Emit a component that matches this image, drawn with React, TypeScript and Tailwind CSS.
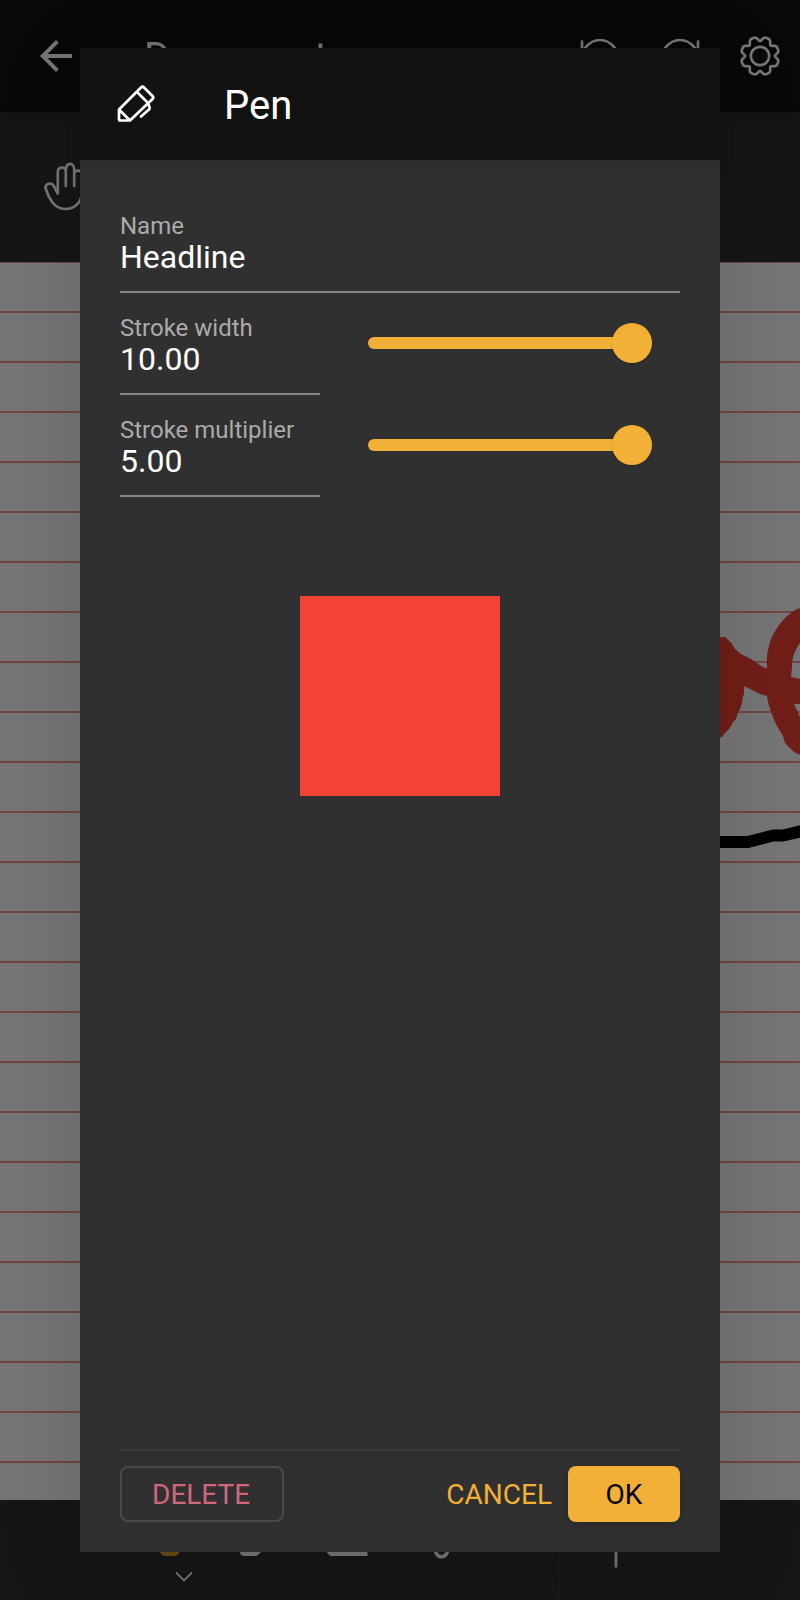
import React, { useState } from "react";

const GEAR_PATH =
  Array.from({ length: 144 }, (_, i) => {
    const angle = (i / 144) * Math.PI * 2;
    const phase = 8 * (angle - Math.PI / 8);
    const r = 17.6 + 2.1 * Math.cos(phase) - 0.6 * Math.cos(2 * phase);
    const x = (24 + r * Math.cos(angle)).toFixed(2);
    const y = (24 + r * Math.sin(angle)).toFixed(2);
    return `${i === 0 ? "M" : "L"}${x} ${y}`;
  }).join("") + "Z";

type IconProps = { children: React.ReactNode; className?: string };

function Icon({ children, className = "" }: IconProps) {
  return (
    <svg
      viewBox="0 0 48 48"
      className={`block h-12 w-12 shrink-0 overflow-visible ${className}`}
      fill="none"
      stroke="currentColor"
      strokeWidth="2.7"
      strokeLinecap="round"
      strokeLinejoin="round"
      aria-hidden="true"
    >
      {children}
    </svg>
  );
}

function TopBar() {
  return (
    <header className="relative flex h-28 shrink-0 items-center bg-[#121212] pr-4 pl-8 shadow-[0_4px_8px_rgba(0,0,0,0.1)]">
      <button type="button" aria-label="Back">
        <Icon>
          <path
            fill="currentColor"
            stroke="none"
            d="M40 22H15.66l11.18-11.18L24 8 8 24l16 16 2.82-2.82L15.66 26H40z"
          />
        </Icon>
      </button>
      <h1 className="ml-16 flex-1 pt-1 text-[40px] leading-[48px]">Document</h1>
      <div className="flex gap-8">
        <button type="button" aria-label="Undo">
          <Icon>
            <path d="M6 9.500V21H17.500M6.500 19.500L9 16C13 11 18 8 24 8C30 8 35 11 39 16C43 22 42 40 24 42" />
          </Icon>
        </button>
        <button type="button" aria-label="Redo">
          <Icon>
            <path d="M42 9.500V21H30.500M41.500 19.500L39 16C35 11 30 8 24 8C18 8 13 11 9 16C5 22 6 40 24 42" />
          </Icon>
        </button>
        <button type="button" aria-label="Settings">
          <Icon>
            <path d={GEAR_PATH} />
            <circle cx="24" cy="24" r="9.200" />
          </Icon>
        </button>
      </div>
    </header>
  );
}

function ToolBar() {
  return (
    <div className="flex h-[150px] shrink-0 items-center bg-[#303030] pl-10">
      <button type="button" aria-label="Hand">
        <Icon>
          <path d="M17.800 30.500L13.500 22.500C12 19.500 5.200 20 5.500 25C7 30 9.500 35.500 12.500 39.500C15.500 43.500 19.500 45.800 25 46C36 46 42 38 42 29V12C42 6.500 34.500 6.500 34.300 10.500M17.800 30.500V9C18 3.200 25.500 3.200 25.800 8V23M25.800 7.500C25.800 -1 34 -1 34.200 6V23" />
        </Icon>
      </button>
    </div>
  );
}

function Paper() {
  return (
    <main className="relative flex-1 overflow-hidden bg-white bg-[linear-gradient(to_bottom,rgba(244,67,54,0.56)_1px,transparent_1px,transparent_49px,rgba(244,67,54,0.56)_49px)] bg-[length:100%_50px]">
      <svg
        viewBox="700 560 100 320"
        className="absolute top-[298px] right-0 h-[320px] w-[100px]"
        aria-hidden="true"
      >
        <path
          fill="#f44336"
          fillRule="evenodd"
          d="M700 637H725.500L732 644L735 649L741 654L751 659L761 666L767 668.500C766 654 769 646 771 639C776 628 786 613 800 608V643C795 650 792 657 792 667L791 677L800 679V704L794 704L800 717V755L794 752L785 743L783 736L777 726C772 716 768 704 767 696L760 694L744 686V694L742.500 698L742 703L740 709L737.500 714L736 719L733 722L730 728L725 733L722 737L718 738H700Z"
        />
        <path
          fill="none"
          stroke="#000"
          strokeWidth="12"
          strokeLinejoin="round"
          d="M700 842H748L773 835.500H783L802 831"
        />
      </svg>
    </main>
  );
}

function BottomBar() {
  return (
    <footer className="flex h-[100px] shrink-0 bg-[#303030]">
      <div className="flex w-[70%] items-start gap-8 border-r-2 border-[#383838] pt-2 pl-40">
        <button type="button" aria-label="Highlighter" className="flex flex-col items-center">
          <Icon className="text-[#e8a323]">
            <path
              fill="currentColor"
              stroke="none"
              d="M4 48C1 47 0 45 0 42V32L30 3L45 18L24 40L18 46Q17 48 14 48Z"
            />
          </Icon>
          <svg
            viewBox="0 0 20 12"
            className="mt-[14px] h-3 w-5"
            fill="none"
            stroke="currentColor"
            strokeWidth="1.8"
            aria-hidden="true"
          >
            <path d="M2 2.500L10 10.500L18 2.500" />
          </svg>
        </button>
        <button type="button" aria-label="Pen">
          <Icon>
            <path strokeWidth="4" d="M2 44V32L30 4L44 18L18 44Q17 46 14 46H5Q2 46 2 44ZM2 42H16" />
          </Icon>
        </button>
        <button type="button" aria-label="Eraser">
          <Icon>
            <path strokeWidth="4" strokeLinecap="butt" d="M47.500 46H11L2 36L28 10L44 25L24 45" />
          </Icon>
        </button>
        <button type="button" aria-label="Lasso">
          <Icon>
            <path strokeWidth="3.500" d="M35 39C34 52 49 52 48 39C42 30 35 34 35 39ZM39 35C4 38 2 5 25 5C48 5 47 29 40 34" />
          </Icon>
        </button>
      </div>
      <div className="flex flex-1 items-start pt-[26px] pl-8">
        <button type="button" aria-label="Add">
          <Icon>
            <path strokeWidth="2.800" strokeLinecap="butt" d="M24 7V41.500M7 24H41" />
          </Icon>
        </button>
      </div>
    </footer>
  );
}

function Field({
  id,
  label,
  initial,
  className = "",
}: {
  id: string;
  label: string;
  initial: string;
  className?: string;
}) {
  const [value, setValue] = useState(initial);
  return (
    <div className={`flex flex-col border-b-2 border-[#838383] pt-5 pb-[18px] ${className}`}>
      <label htmlFor={id} className="text-2xl leading-[30px] whitespace-nowrap text-[#ababab]">
        {label}
      </label>
      <input
        id={id}
        value={value}
        onChange={(e) => setValue(e.target.value)}
        className="h-8 w-full bg-transparent text-[32px] leading-8 text-white outline-none"
      />
    </div>
  );
}

function SliderField({
  id,
  label,
  initial,
  max,
}: {
  id: string;
  label: string;
  initial: string;
  max: number;
}) {
  return (
    <div className="flex items-center gap-12">
      <Field id={id} label={label} initial={initial} className="w-[200px] shrink-0" />
      <input
        type="range"
        aria-label={label}
        min={0}
        max={max}
        defaultValue={max}
        className="mr-7 mb-0.5 h-10 min-w-0 flex-1 appearance-none bg-transparent [&::-webkit-slider-runnable-track]:h-3 [&::-webkit-slider-runnable-track]:rounded-full [&::-webkit-slider-runnable-track]:bg-[#f2b037] [&::-webkit-slider-thumb]:-mt-[14px] [&::-webkit-slider-thumb]:h-10 [&::-webkit-slider-thumb]:w-10 [&::-webkit-slider-thumb]:appearance-none [&::-webkit-slider-thumb]:rounded-full [&::-webkit-slider-thumb]:bg-[#f2b037] [&::-webkit-slider-thumb]:shadow-[0_1px_3px_rgba(0,0,0,0.15)]"
      />
    </div>
  );
}

function PenDialog() {
  return (
    <div
      role="dialog"
      aria-modal="true"
      aria-labelledby="dialog-title"
      className="flex flex-1 flex-col bg-[#303030] text-white shadow-[0_16px_80px_rgba(0,0,0,0.13)]"
    >
      <header className="flex h-28 shrink-0 items-center gap-16 bg-[#121212] px-8 shadow-[0_4px_16px_rgba(0,0,0,0.12)]">
        <Icon>
          <path d="M7 29.500L29 7.500Q30.500 6 32 7.500L40.500 16Q42 17.500 40.500 19L18 40.500H8.500Q7 40.500 7 39ZM7.500 30L17.500 40M25 12L36 23L37.500 27V29L29 36.500" />
        </Icon>
        <h2 id="dialog-title" className="pt-1 text-[40px] leading-[48px]">
          Pen
        </h2>
      </header>
      <form className="flex flex-1 flex-col px-10 pt-[31px] pb-[30px]" onSubmit={(e) => e.preventDefault()}>
        <Field id="pen-name" label="Name" initial="Headline" />
        <SliderField id="stroke-width" label="Stroke width" initial="10.00" max={10} />
        <SliderField id="stroke-multiplier" label="Stroke multiplier" initial="5.00" max={5} />
        <button
          type="button"
          aria-label="Color"
          className="mt-[99px] mb-12 h-[200px] w-[200px] shrink-0 self-center bg-[#f44336]"
        />
        <div className="mt-auto flex items-center border-t-2 border-[#3a3a3a] pt-[15px] text-[28px] leading-8">
          <button
            type="button"
            className="h-14 rounded-lg border-2 border-[#4a4a4a] pr-8 pl-[30px] pt-0.5 text-[#cf667a]"
          >
            DELETE
          </button>
          <button type="button" className="ml-auto h-14 px-4 pt-0.5 text-[#f2b037]">
            CANCEL
          </button>
          <button
            type="submit"
            className="h-14 w-28 rounded-lg bg-[#f2b037] pt-0.5 text-black shadow-[0_2px_8px_rgba(0,0,0,0.2)]"
          >
            OK
          </button>
        </div>
      </form>
    </div>
  );
}

export default function App() {
  return (
    <div className="relative flex min-h-screen flex-col font-[Roboto,sans-serif] text-white">
      <TopBar />
      <ToolBar />
      <Paper />
      <BottomBar />
      <div className="absolute inset-0 flex overflow-hidden bg-black/54 px-[10%] py-12">
        <PenDialog />
      </div>
    </div>
  );
}
